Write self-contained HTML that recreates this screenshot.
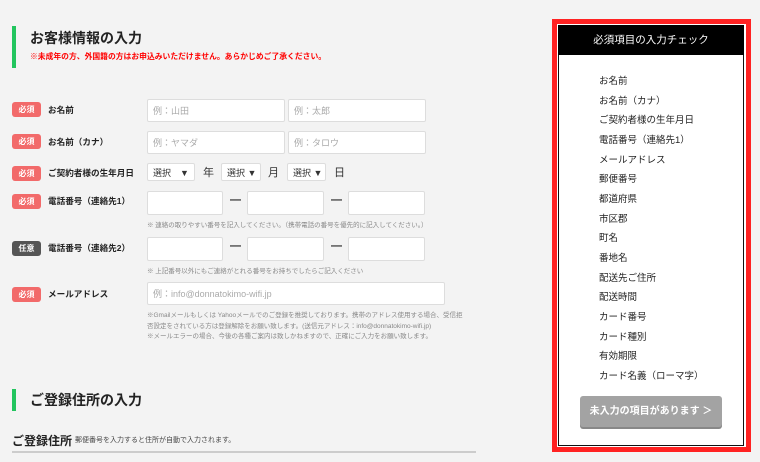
<!DOCTYPE html>
<html><head><meta charset="utf-8"><style>
*{margin:0;padding:0;box-sizing:border-box}
body{width:760px;height:462px;background:#f3f3f3;font-family:"Liberation Sans","Noto Sans CJK JP",sans-serif;position:relative;overflow:hidden;color:#222}
.a{position:absolute;white-space:nowrap}
.bar{position:absolute;left:12px;width:4px;background:#22c55e}
.h{font-size:14px;font-weight:bold;color:#222}
.b{position:absolute;left:12px;width:29px;height:15px;border-radius:3px;background:#f26a6a;color:#fff;font-size:8px;font-weight:bold;text-align:center;line-height:15px}
.g{background:#555}
.l{position:absolute;left:48px;font-size:8.6px;font-weight:bold}
.i{position:absolute;background:#fff;border:1px solid #ddd;border-radius:2px;font-size:9px;color:#aaa;padding-left:5px;display:flex;align-items:center}
.s{position:absolute;background:#fff;border:1px solid #ddd;border-radius:2px;font-size:9px;color:#333;padding-left:5px;display:flex;align-items:center;height:18px}
.u{position:absolute;font-size:11px;color:#333}
.n{position:absolute;left:147px;font-size:6.5px;color:#888;white-space:nowrap}
.d{position:absolute;font-size:11px;color:#222;font-weight:bold}
.r{position:absolute;left:599px;font-size:9.5px;color:#222}
</style></head><body>
<div class="bar" style="top:26px;height:42px"></div>
<div class="a h" style="left:30px;top:28px">お客様情報の入力</div>
<div class="a" style="left:30px;top:51px;font-size:7.8px;font-weight:bold;color:#f00">※未成年の方、外国籍の方はお申込みいただけません。あらかじめご了承ください。</div>

<div class="b" style="top:102px">必須</div><div class="l" style="top:104px">お名前</div>
<div class="i" style="left:147px;top:99px;width:138px;height:23px">例：山田</div>
<div class="i" style="left:288px;top:99px;width:138px;height:23px">例：太郎</div>

<div class="b" style="top:134px">必須</div><div class="l" style="top:136px">お名前（カナ）</div>
<div class="i" style="left:147px;top:131px;width:138px;height:23px">例：ヤマダ</div>
<div class="i" style="left:288px;top:131px;width:138px;height:23px">例：タロウ</div>

<div class="b" style="top:166px">必須</div><div class="l" style="top:167px">ご契約者様の生年月日</div>
<div class="s" style="left:147px;top:163px;width:48px">選択　▼</div><div class="u" style="left:203px;top:164px">年</div>
<div class="s" style="left:221px;top:163px;width:40px">選択 ▼</div><div class="u" style="left:268px;top:164px">月</div>
<div class="s" style="left:287px;top:163px;width:39px">選択 ▼</div><div class="u" style="left:334px;top:164px">日</div>

<div class="b" style="top:194px">必須</div><div class="l" style="top:195px">電話番号（連絡先1）</div>
<div class="i" style="left:147px;top:191px;width:76px;height:24px"></div><div class="d" style="left:230px;top:194px">—</div>
<div class="i" style="left:247px;top:191px;width:77px;height:24px"></div><div class="d" style="left:331px;top:194px">—</div>
<div class="i" style="left:348px;top:191px;width:77px;height:24px"></div>
<div class="n" style="top:219px">※ 連絡の取りやすい番号を記入してください。（携帯電話の番号を優先的に記入してください。）</div>

<div class="b g" style="top:241px">任意</div><div class="l" style="top:242px">電話番号（連絡先2）</div>
<div class="i" style="left:147px;top:237px;width:76px;height:24px"></div><div class="d" style="left:230px;top:240px">—</div>
<div class="i" style="left:247px;top:237px;width:77px;height:24px"></div><div class="d" style="left:331px;top:240px">—</div>
<div class="i" style="left:348px;top:237px;width:77px;height:24px"></div>
<div class="n" style="top:265px">※ 上記番号以外にもご連絡がとれる番号をお持ちでしたらご記入ください</div>

<div class="b" style="top:287px">必須</div><div class="l" style="top:288px">メールアドレス</div>
<div class="i" style="left:147px;top:282px;width:298px;height:23px">例：info@donnatokimo-wifi.jp</div>
<div class="n" style="top:309px">※Gmailメールもしくは Yahooメールでのご登録を推奨しております。携帯のアドレス使用する場合、受信拒</div>
<div class="n" style="top:320px">否設定をされている方は登録解除をお願い致します。(送信元アドレス：info@donnatokimo-wifi.jp)</div>
<div class="n" style="top:330px">※メールエラーの場合、今後の各種ご案内は致しかねますので、正確にご入力をお願い致します。</div>

<div class="bar" style="top:389px;height:22px"></div>
<div class="a h" style="left:30px;top:390px">ご登録住所の入力</div>
<div class="a" style="left:12px;top:432px;font-size:12px;font-weight:bold">ご登録住所</div>
<div class="a" style="left:75px;top:435px;font-size:7px;color:#444">郵便番号を入力すると住所が自動で入力されます。</div>
<div class="a" style="left:12px;top:451px;width:464px;height:2px;background:#ccc"></div>

<div class="a" style="left:552px;top:19px;width:199px;height:433px;border:5px solid #f22;background:#fff"></div>
<div class="a" style="left:558px;top:25px;width:186px;height:421px;border:1.5px solid #111;background:#fff"></div>
<div class="a" style="left:558px;top:25px;width:186px;height:30px;background:#000;color:#fff;font-size:10.5px;text-align:center;line-height:30px">必須項目の入力チェック</div>
<div class="r" style="top:73px">お名前</div>
<div class="r" style="top:93px">お名前（カナ）</div>
<div class="r" style="top:112px">ご契約者様の生年月日</div>
<div class="r" style="top:132px">電話番号（連絡先1）</div>
<div class="r" style="top:152px">メールアドレス</div>
<div class="r" style="top:171px">郵便番号</div>
<div class="r" style="top:191px">都道府県</div>
<div class="r" style="top:211px">市区郡</div>
<div class="r" style="top:230px">町名</div>
<div class="r" style="top:250px">番地名</div>
<div class="r" style="top:270px">配送先ご住所</div>
<div class="r" style="top:289px">配送時間</div>
<div class="r" style="top:309px">カード番号</div>
<div class="r" style="top:329px">カード種別</div>
<div class="r" style="top:348px">有効期限</div>
<div class="r" style="top:368px">カード名義（ローマ字）</div>
<div class="a" style="left:580px;top:396px;width:142px;height:31px;background:#a3a3a3;border-radius:3px;box-shadow:0 2px 0 #888;color:#fff;font-size:10px;font-weight:bold;text-align:center;line-height:31px">未入力の項目があります ＞</div>
</body></html>
